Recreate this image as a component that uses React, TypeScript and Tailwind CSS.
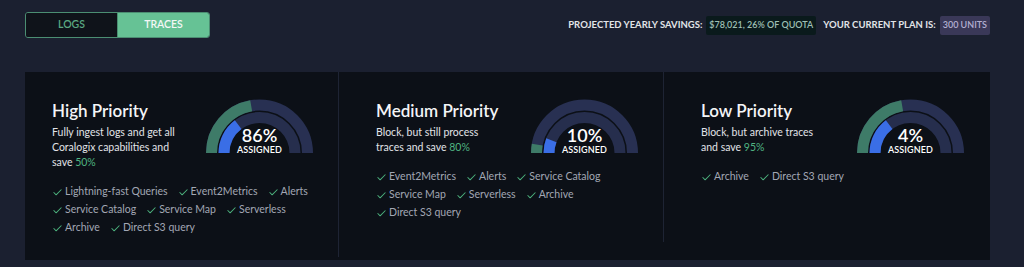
import { Check } from 'lucide-react';

type Card = {
  title: string;
  lines: string[];
  tail: string;
  pct: string;
  assigned: string;
  outer: number;
  inner: number;
  rows: string[][];
};

const cards: Card[] = [
  {
    title: 'High Priority',
    lines: ['Fully ingest logs and get all', 'Coralogix capabilities and'],
    tail: 'save ',
    pct: '50%',
    assigned: '86%',
    outer: 80,
    inner: 53,
    rows: [
      ['Lightning-fast Queries', 'Event2Metrics', 'Alerts'],
      ['Service Catalog', 'Service Map', 'Serverless'],
      ['Archive', 'Direct S3 query'],
    ],
  },
  {
    title: 'Medium Priority',
    lines: ['Block, but still process'],
    tail: 'traces and save ',
    pct: '80%',
    assigned: '10%',
    outer: 10,
    inner: 21,
    rows: [
      ['Event2Metrics', 'Alerts', 'Service Catalog'],
      ['Service Map', 'Serverless', 'Archive'],
      ['Direct S3 query'],
    ],
  },
  {
    title: 'Low Priority',
    lines: ['Block, but archive traces'],
    tail: 'and save ',
    pct: '95%',
    assigned: '4%',
    outer: 80,
    inner: 53,
    rows: [['Archive', 'Direct S3 query']],
  },
];

// angles are measured from the left end of the half circle, going over the top
function arc(r: number, a1: number, a2: number) {
  const cx = 53.5;
  const cy = 54;
  const p = (a: number) => {
    const t = (a * Math.PI) / 180;
    return [cx - r * Math.cos(t), cy - r * Math.sin(t)];
  };
  const [x1, y1] = p(a1);
  const [x2, y2] = p(a2);
  return `M${x1} ${y1} A${r} ${r} 0 0 1 ${x2} ${y2}`;
}

function Gauge({ outer, inner, label }: { outer: number; inner: number; label: string }) {
  return (
    <div className="relative w-[107px] h-[54px] shrink-0">
      <svg width="107" height="54" viewBox="0 0 107 54" fill="none">
        <path d={arc(48, 0, 180)} stroke="#283052" strokeWidth="11" />
        <path d={arc(48, 0, outer)} stroke="#3e7b68" strokeWidth="11" />
        <path d={arc(35.5, 0, 180)} stroke="#262e4d" strokeWidth="11" />
        <path d={arc(35.5, 0, inner)} stroke="#3a6ee6" strokeWidth="11" />
      </svg>
      <div className="absolute inset-x-0 bottom-[-2px] flex flex-col items-center text-white">
        <span className="text-[18px] font-semibold leading-[18px]">{label}</span>
        <span className="text-[9px] font-semibold leading-[11px] tracking-[0.1px]">ASSIGNED</span>
      </div>
    </div>
  );
}

function Column({ card, className }: { card: Card; className: string }) {
  return (
    <div className={`pt-[27px] pb-[20px] ${className}`}>
      <div className="flex justify-between items-start">
        <div>
          <h2 className="text-[17px] font-semibold leading-[24px] text-[#f4f5f7]">{card.title}</h2>
          <p className="mt-[2px] text-[10.5px] leading-[15px] text-[#e1e3e8]">
            {card.lines.map((l) => (
              <span key={l} className="block">
                {l}
              </span>
            ))}
            {card.tail}
            <span className="text-[#4fb482]">{card.pct}</span>
          </p>
        </div>
        <Gauge outer={card.outer} inner={card.inner} label={card.assigned} />
      </div>
      <div className="mt-[13px] flex flex-col">
        {card.rows.map((row, i) => (
          <div key={i} className="flex gap-[10px] h-[18px] items-center whitespace-nowrap">
            {row.map((f) => (
              <span key={f} className="flex items-center gap-[2px] text-[10.5px] text-[#a2a7b4]">
                <Check size={11} strokeWidth={2.2} className="text-[#4cb17d]" />
                {f}
              </span>
            ))}
          </div>
        ))}
      </div>
    </div>
  );
}

export default function App() {
  return (
    <div className="w-[1024px] h-[267px] bg-[#1b2030] font-['Lato','Open_Sans',sans-serif] overflow-hidden">
      <div className="flex justify-between items-center pt-[12px] pl-[25px] pr-[34px]">
        <div className="flex w-[185px] h-[26px] border border-[#4b8e72] rounded-[3px] overflow-hidden">
          <button className="w-[92px] bg-[#0f131a] text-[10.5px] font-semibold text-[#5aa882] border-r border-[#4b8e72]">
            LOGS
          </button>
          <button className="flex-1 bg-[#66c295] text-[10.5px] font-semibold text-[#f3f7f5]">TRACES</button>
        </div>
        <div className="flex items-center text-[9.5px] font-bold text-[#e2e4e8]">
          <span>PROJECTED YEARLY SAVINGS:</span>
          <span className="ml-[4px] h-[19px] px-[3px] flex items-center bg-[#0a1a1c] text-[#9dbfb4] text-[9px] font-semibold rounded-[2px]">
            $78,021, 26% OF QUOTA
          </span>
          <span className="ml-[7px]">YOUR CURRENT PLAN IS:</span>
          <span className="ml-[4px] h-[19px] px-[3px] flex items-center bg-[#3a3858] text-[#b3afd2] text-[9px] font-semibold rounded-[2px]">
            300 UNITS
          </span>
        </div>
      </div>
      <div className="mt-[34px] ml-[25px] w-[965px] h-[188px] bg-[#0c1017] flex items-start">
        <Column card={cards[0]} className="w-[314px] pl-[27px] pr-[25px] border-r border-[#1e2434]" />
        <Column card={cards[1]} className="w-[325px] pl-[37px] pr-[25px] border-r border-[#1e2434]" />
        <Column card={cards[2]} className="flex-1 pl-[37px] pr-[26px]" />
      </div>
    </div>
  );
}
